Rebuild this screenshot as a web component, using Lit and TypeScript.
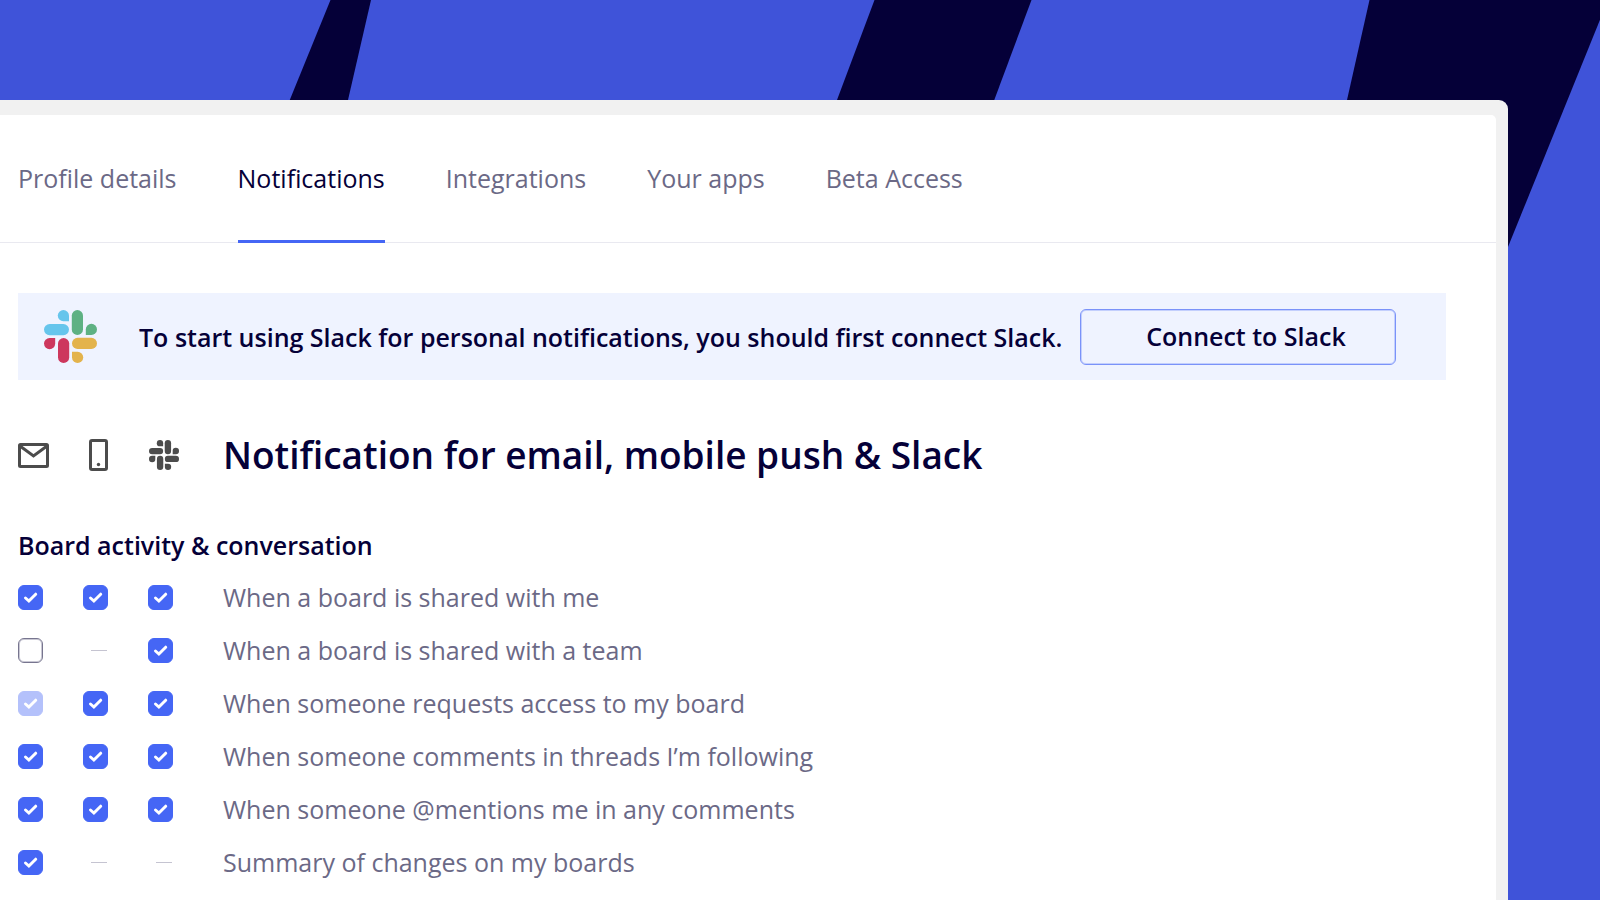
import { LitElement, html, css, svg, nothing } from "lit";
import { customElement, property, state } from "lit/decorators.js";
import { classMap } from "lit/directives/class-map.js";

type Cell = "on" | "off" | "locked" | "none";

const channels = ["Email", "Mobile push", "Slack"];

const rows: { label: string; cells: Cell[] }[] = [
  { label: "When a board is shared with me", cells: ["on", "on", "on"] },
  { label: "When a board is shared with a team", cells: ["off", "none", "on"] },
  { label: "When someone requests access to my board", cells: ["locked", "on", "on"] },
  { label: "When someone comments in threads I’m following", cells: ["on", "on", "on"] },
  { label: "When someone @mentions me in any comments", cells: ["on", "on", "on"] },
  { label: "Summary of changes on my boards", cells: ["on", "none", "none"] },
];

const tabs = ["Profile details", "Notifications", "Integrations", "Your apps", "Beta Access"];

@customElement("slack-mark")
export class SlackMark extends LitElement {
  @property({ type: Boolean, reflect: true }) mono = false;

  static styles = css`
    :host { display: block; width: 53px; height: 53px; }
    :host([mono]) { width: 30px; height: 30px; }
    .mark { display: block; width: 100%; height: 100%; }
    .blue { fill: #66c5ec; }
    .green { fill: #5eb183; }
    .yellow { fill: #e3b34c; }
    .red { fill: #cd375d; }
    :host([mono]) .mark * { fill: #4c4c4c; }
  `;

  private arm(name: string, turn: number) {
    return svg`<g class=${name} transform="rotate(${turn} 26.5 26.5)">
      <path d="M25 11.2H19.4A5.6 5.6 0 1 1 25 5.6Z" />
      <rect x="0" y="14" width="25" height="11.2" rx="5.6" />
    </g>`;
  }

  render() {
    return html`<svg class="mark" viewBox="0 0 53 53" aria-hidden="true">
      ${this.arm("blue", 0)}${this.arm("green", 90)}${this.arm("yellow", 180)}${this.arm("red", 270)}
    </svg>`;
  }
}

@customElement("check-cell")
export class CheckCell extends LitElement {
  @property() value: Cell = "off";
  @property() name = "";

  static styles = css`
    :host { display: grid; width: 25px; height: 25px; }
    .box, .tick { grid-area: 1 / 1; width: 25px; height: 25px; }
    .box {
      appearance: none;
      box-sizing: border-box;
      margin: 0;
      border: 1px solid #77758f;
      border-radius: 6px;
      background: #fff;
      box-shadow: inset 0 0 0 1px #c9c8d4;
    }
    .box:checked { background: #4566f5; border-color: #4566f5; box-shadow: none; }
    .box:disabled { background: #b4c1fb; border-color: #b4c1fb; }
    .tick {
      pointer-events: none;
      fill: none;
      stroke: #fff;
      stroke-width: 3;
      stroke-linecap: round;
    }
    .dash {
      align-self: center;
      justify-self: end;
      width: 16px;
      height: 1px;
      margin-right: 1px;
      background: #c5c4d1;
    }
  `;

  render() {
    if (this.value === "none") return html`<span class="dash"></span>`;
    return html`
      <input class="box" type="checkbox" aria-label=${this.name}
        .checked=${this.value !== "off"} ?disabled=${this.value === "locked"}
        @change=${(e: Event) => { this.value = (e.target as HTMLInputElement).checked ? "on" : "off"; }} />
      ${this.value === "off" ? nothing : html`
        <svg class="tick" viewBox="0 0 25 25" aria-hidden="true"><path d="M7.5 13L10.9 16L17.7 9.2" /></svg>`}
    `;
  }
}

@customElement("app-root")
export class AppRoot extends LitElement {
  @state() private active = "Notifications";

  static styles = css`
    :host {
      display: grid;
      height: 100vh;
      overflow: hidden;
      background: #3f53d9;
      color: #050038;
      font: 400 25px/34px "Open Sans", "Noto Sans", sans-serif;
    }
    .backdrop {
      grid-area: 1 / 1;
      width: 100%;
      height: 100%;
      min-height: 0;
      fill: #050038;
    }
    .frame {
      grid-area: 1 / 1;
      min-width: 0;
      margin: 100px 92px 0 0;
      padding: 15px 12px 0 0;
      border-top-right-radius: 9px;
      background: #f1f1f1;
      display: grid;
    }
    .panel {
      min-width: 0;
      background: #fff;
      border-top-right-radius: 5px;
    }
    .tabs {
      display: flex;
      gap: 61px;
      padding-left: 18px;
      box-shadow: inset 0 -1px #e9e9f0;
    }
    .tab {
      padding: 46px 0 45px;
      border-bottom: 3px solid transparent;
      color: #6b6986;
      text-decoration: none;
      white-space: nowrap;
    }
    .tab.active { color: #050038; border-color: #4566f5; }
    .content { padding: 50px 50px 0 18px; }
    .banner {
      display: flex;
      align-items: center;
      height: 87px;
      padding: 0 50px 0 26px;
      background: #eff3ff;
      font-weight: 600;
    }
    .message { flex: 1; margin: 0 0 0 42px; white-space: nowrap; }
    .connect {
      box-sizing: border-box;
      width: 316px;
      height: 56px;
      padding: 0 0 2px 16px;
      border: 1px solid #7a92f9;
      border-radius: 6px;
      background: transparent;
      box-shadow: inset 0 0 0 1px #c3cffd;
      color: inherit;
      font: inherit;
    }
    .line {
      display: grid;
      grid-template-columns: 65px 65px 75px 1fr;
      align-items: center;
    }
    .heading { margin-top: 45px; height: 60px; }
    .icon { display: block; fill: none; stroke: #4c4c4c; stroke-width: 3; }
    .phone { margin-left: 6px; }
    .slack { margin-left: 1px; }
    .dot { fill: #4c4c4c; stroke: none; }
    .title { margin: 0; font-size: 37px; line-height: 54px; font-weight: 600; }
    .group { margin: 43px 0 9px; font-size: 25px; line-height: 34px; font-weight: 600; }
    .row { height: 53px; color: #6b6986; }
    .label { padding-bottom: 2px; }
  `;

  render() {
    return html`
      <svg class="backdrop" viewBox="0 0 1600 900" preserveAspectRatio="xMaxYMin slice" aria-hidden="true">
        <path d="M330.5 0H371L325 200H249Z" />
        <path d="M874.5 0H1031.5L957 200H799.5Z" />
        <path d="M1369.5 0H1608L1427 447H1269Z" />
      </svg>
      <main class="frame">
        <div class="panel">
          <nav class="tabs">
            ${tabs.map((t) => html`<a href="#" class=${classMap({ tab: true, active: t === this.active })}
              @click=${(e: Event) => { e.preventDefault(); this.active = t; }}>${t}</a>`)}
          </nav>
          <section class="content">
            <div class="banner">
              <slack-mark></slack-mark>
              <p class="message">To start using Slack for personal notifications, you should first connect Slack.</p>
              <button class="connect" type="button">Connect to Slack</button>
            </div>
            <div class="line heading">
              <svg class="icon" width="31" height="25" viewBox="0 0 31 25" aria-hidden="true">
                <rect x="1.5" y="1.5" width="28" height="22" rx="1" /><path d="M2 3L15.5 13L29 3" />
              </svg>
              <svg class="icon phone" width="19" height="32" viewBox="0 0 19 32" aria-hidden="true">
                <rect x="1.5" y="1.5" width="16" height="29" rx="1.5" /><circle class="dot" cx="9.5" cy="25.5" r="1.7" />
              </svg>
              <slack-mark class="slack" mono></slack-mark>
              <h1 class="title">Notification for email, mobile push &amp; Slack</h1>
            </div>
            <h2 class="group">Board activity &amp; conversation</h2>
            ${rows.map((r) => html`<div class="line row">
              ${r.cells.map((c, i) => html`<check-cell .value=${c} .name=${`${r.label}: ${channels[i]}`}></check-cell>`)}
              <span class="label">${r.label}</span>
            </div>`)}
          </section>
        </div>
      </main>
    `;
  }
}
